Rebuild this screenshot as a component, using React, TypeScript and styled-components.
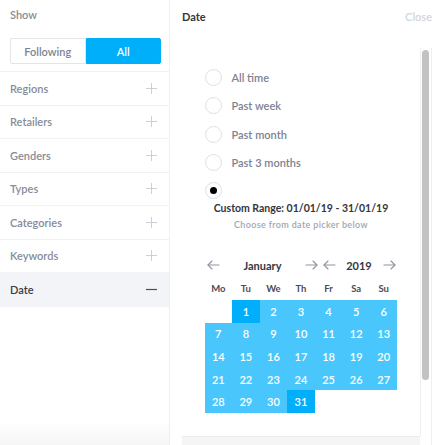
import React from "react";
import styled, { createGlobalStyle } from "styled-components";

const GlobalStyle = createGlobalStyle`
  html, body { margin: 0; padding: 0; background: #fff; }
  body { font-family: Lato, "Open Sans", sans-serif; -webkit-font-smoothing: antialiased; }
  * { box-sizing: border-box; }
`;

const Page = styled.div`
  display: flex;
  width: 442px;
  height: 445px;
  overflow: hidden;
`;

const LeftPanel = styled.div`
  width: 170px;
  flex-shrink: 0;
  border-right: 1px solid #eeeff2;
  display: flex;
  flex-direction: column;
  background: linear-gradient(to bottom, #fff 0, #fff 422px, #f5f5f6 445px);
`;

const ShowSection = styled.div`
  height: 72px;
  border-bottom: 1px solid #f0f1f4;
  padding: 8px 9px 0 10px;
`;

const SectionLabel = styled.div`
  font-size: 11px;
  font-weight: 600;
  color: #878c99;
  line-height: 13px;
`;

const Toggle = styled.div`
  display: flex;
  margin-top: 17px;
  height: 26px;
  width: 151px;
`;

const ToggleButton = styled.div<{ $active?: boolean }>`
  flex: 1;
  display: flex;
  align-items: center;
  justify-content: center;
  font-size: 11px;
  font-weight: 600;
  border-radius: ${(p) => (p.$active ? "0 2px 2px 0" : "2px 0 0 2px")};
  background: ${(p) => (p.$active ? "#00aff9" : "#fff")};
  color: ${(p) => (p.$active ? "#fff" : "#7e8391")};
  border: 1px solid ${(p) => (p.$active ? "#00aff9" : "#e3e5ea")};
`;

const FilterRow = styled.div<{ $open?: boolean }>`
  height: 33.5px;
  flex-shrink: 0;
  display: flex;
  align-items: center;
  justify-content: space-between;
  padding: 0 12px 0 10px;
  border-bottom: 1px solid ${(p) => (p.$open ? "#f3f4f8" : "#f1f2f5")};
  background: ${(p) => (p.$open ? "#f3f4f8" : "transparent")};
  font-size: 11px;
  font-weight: 600;
  color: ${(p) => (p.$open ? "#3a3d45" : "#878c99")};
`;

const RightPanel = styled.div`
  flex: 1;
  display: flex;
  flex-direction: column;
  padding-left: 12px;
`;

const Header = styled.div`
  height: 48px;
  flex-shrink: 0;
  display: flex;
  justify-content: space-between;
  padding: 10px 10px 0 0;
  font-size: 11px;
  font-weight: 700;
  line-height: 13px;
`;

const HeaderTitle = styled.span`
  color: #34373f;
`;

const CloseLink = styled.span`
  color: #d2d5da;
  font-weight: 600;
`;

const ScrollBox = styled.div`
  flex: 1;
  width: 250px;
  display: flex;
  flex-direction: column;
  border-right: 1px solid #eeeff1;
`;

const ScrollMain = styled.div`
  flex: 1;
  display: flex;
`;

const Content = styled.div`
  flex: 1;
  display: flex;
  justify-content: center;
  padding-top: 15px;
`;

const Inner = styled.div`
  width: 193px;
  display: flex;
  flex-direction: column;
`;

const VTrack = styled.div`
  width: 11px;
  border-left: 1px solid #efeff1;
  padding: 2px 1px 0 1px;
`;

const Thumb = styled.div`
  width: 7px;
  height: 330px;
  border-radius: 4px;
  background: #c2c2c2;
`;

const HTrack = styled.div`
  height: 9px;
  margin-right: 11px;
  background: #f5f5f6;
  border-top: 1px solid #ececee;
`;

const RadioRow = styled.div`
  height: 28.5px;
  display: flex;
  align-items: center;
  gap: 10px;
  font-size: 11px;
  font-weight: 600;
  color: #7d8292;
`;

const RadioCircle = styled.div<{ $checked?: boolean }>`
  width: 17px;
  height: 17px;
  border-radius: 50%;
  border: 1px solid #dfe0e4;
  display: flex;
  align-items: center;
  justify-content: center;
  flex-shrink: 0;
  &::after {
    content: "";
    display: ${(p) => (p.$checked ? "block" : "none")};
    width: 7px;
    height: 7px;
    border-radius: 50%;
    background: #000;
  }
`;

const CheckedRadio = styled(RadioCircle)`
  margin-top: 4.5px;
`;

const RangeText = styled.div`
  margin-top: 2.5px;
  text-align: center;
  font-size: 10.5px;
  font-weight: 700;
  line-height: 14px;
  color: #33363d;
`;

const HintText = styled.div`
  margin-top: 4px;
  text-align: center;
  font-size: 9px;
  font-weight: 600;
  letter-spacing: 0.35px;
  line-height: 12px;
  color: #a2a6b0;
`;

const Nav = styled.div`
  margin-top: 26px;
  height: 16px;
  display: flex;
`;

const NavGroup = styled.div<{ $w: number }>`
  width: ${(p) => p.$w}px;
  display: flex;
  align-items: center;
  justify-content: space-between;
  padding: 0 2px;
  font-size: 11px;
  font-weight: 700;
  color: #34373f;
`;

const WeekHeader = styled.div`
  margin-top: 8px;
  height: 14px;
  display: grid;
  grid-template-columns: repeat(7, 1fr);
  font-size: 9.5px;
  font-weight: 700;
  color: #4a4d55;
  text-align: center;
  align-items: center;
`;

const DayGrid = styled.div`
  margin-top: 5px;
  display: grid;
  grid-template-columns: repeat(7, 1fr);
  grid-auto-rows: 22.6px;
`;

const Day = styled.div<{ $kind: "empty" | "range" | "end" }>`
  display: flex;
  align-items: center;
  justify-content: center;
  font-size: 11px;
  font-weight: 600;
  color: #fff;
  background: ${(p) =>
    p.$kind === "empty" ? "transparent" : p.$kind === "end" ? "#00aefa" : "#49c7fd"};
`;

const Arrow = ({ dir }: { dir: "left" | "right" }) => (
  <svg width="13" height="10" viewBox="0 0 13 10" fill="none" stroke="#8f94a0" strokeWidth="1.1" strokeLinecap="round" strokeLinejoin="round">
    {dir === "left" ? (
      <>
        <path d="M12 5H1" />
        <path d="M5 1L1 5l4 4" />
      </>
    ) : (
      <>
        <path d="M1 5h11" />
        <path d="M8 1l4 4-4 4" />
      </>
    )}
  </svg>
);

const PlusIcon = () => (
  <svg width="11" height="11" viewBox="0 0 11 11" stroke="#cdd0d6" strokeWidth="1">
    <path d="M5.5 0v11M0 5.5h11" />
  </svg>
);

const MinusIcon = () => (
  <svg width="11" height="11" viewBox="0 0 11 11" stroke="#4a4d55" strokeWidth="1.2">
    <path d="M0 5.5h11" />
  </svg>
);

const filters = ["Regions", "Retailers", "Genders", "Types", "Categories", "Keywords"];
const presets = ["All time", "Past week", "Past month", "Past 3 months"];
const weekDays = ["Mo", "Tu", "We", "Th", "Fr", "Sa", "Su"];

export default function App() {
  const cells: { label: string; kind: "empty" | "range" | "end" }[] = [{ label: "", kind: "empty" }];
  for (let d = 1; d <= 31; d++) {
    cells.push({ label: String(d), kind: d === 1 || d === 31 ? "end" : "range" });
  }
  return (
    <>
      <GlobalStyle />
      <Page>
        <LeftPanel>
          <ShowSection>
            <SectionLabel>Show</SectionLabel>
            <Toggle>
              <ToggleButton>Following</ToggleButton>
              <ToggleButton $active>All</ToggleButton>
            </Toggle>
          </ShowSection>
          {filters.map((f) => (
            <FilterRow key={f}>
              {f}
              <PlusIcon />
            </FilterRow>
          ))}
          <FilterRow $open>
            Date
            <MinusIcon />
          </FilterRow>
        </LeftPanel>
        <RightPanel>
          <Header>
            <HeaderTitle>Date</HeaderTitle>
            <CloseLink>Close</CloseLink>
          </Header>
          <ScrollBox>
            <ScrollMain>
              <Content>
                <Inner>
                  {presets.map((p) => (
                    <RadioRow key={p}>
                      <RadioCircle />
                      {p}
                    </RadioRow>
                  ))}
                  <CheckedRadio $checked />
                  <RangeText>Custom Range: 01/01/19 - 31/01/19</RangeText>
                  <HintText>Choose from date picker below</HintText>
                  <Nav>
                    <NavGroup $w={116}>
                      <Arrow dir="left" />
                      January
                      <Arrow dir="right" />
                    </NavGroup>
                    <NavGroup $w={77}>
                      <Arrow dir="left" />
                      2019
                      <Arrow dir="right" />
                    </NavGroup>
                  </Nav>
                  <WeekHeader>
                    {weekDays.map((w) => (
                      <span key={w}>{w}</span>
                    ))}
                  </WeekHeader>
                  <DayGrid>
                    {cells.map((c, i) => (
                      <Day key={i} $kind={c.kind}>
                        {c.label}
                      </Day>
                    ))}
                  </DayGrid>
                </Inner>
              </Content>
              <VTrack>
                <Thumb />
              </VTrack>
            </ScrollMain>
            <HTrack />
          </ScrollBox>
        </RightPanel>
      </Page>
    </>
  );
}
